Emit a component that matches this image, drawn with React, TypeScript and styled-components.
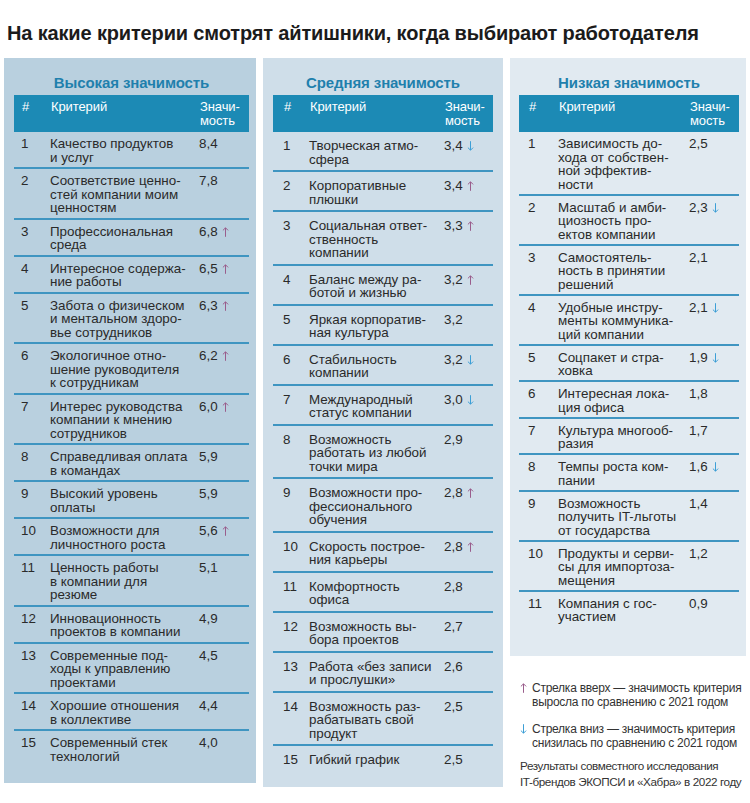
import React from "react";
import styled, { createGlobalStyle } from "styled-components";

const GlobalStyle = createGlobalStyle`
  html, body { margin: 0; padding: 0; background: #ffffff; }
  body { font-family: "Liberation Sans", Arial, sans-serif; -webkit-font-smoothing: antialiased; }
`;

type Dir = "up" | "down";
type Item = { text: string[]; value: string; dir?: Dir };

type Cfg = {
  bg: string;
  padL: number;
  padR: number;
  padB: number;
  rowPl: number;
  numW: number;
  textW: number;
  pt: number;
  pb: number;
};

const Page = styled.div`
  width: 750px;
  padding: 0 4px;
  box-sizing: border-box;
  color: #262626;
`;

const Title = styled.h1`
  margin: 0;
  padding: 22px 0 0 3px;
  font-size: 20px;
  line-height: 22px;
  font-weight: 700;
  color: #1b1b1b;
  letter-spacing: -0.15px;
  white-space: nowrap;
`;

const Columns = styled.div`
  display: grid;
  grid-template-columns: 252px 240px 236px;
  column-gap: 7px;
  margin-top: 14px;
  align-items: start;
`;

const Side = styled.div`
  display: flex;
  flex-direction: column;
`;

const Panel = styled.section<{ $c: Cfg }>`
  background: ${(p) => p.$c.bg};
  padding: 16px ${(p) => p.$c.padR}px ${(p) => p.$c.padB}px ${(p) => p.$c.padL}px;
`;

const PanelTitle = styled.h2`
  margin: 0 0 3px;
  text-align: center;
  font-size: 15px;
  line-height: 18px;
  font-weight: 700;
  color: #1f80ad;
  letter-spacing: -0.1px;
`;

const HeadBar = styled.div<{ $c: Cfg }>`
  display: grid;
  grid-template-columns: ${(p) => `${p.$c.numW}px ${p.$c.textW}px 1fr`};
  height: 37px;
  box-sizing: border-box;
  padding: 5px 0 0 ${(p) => p.$c.rowPl + 1}px;
  background: #1c8ab5;
  color: #ffffff;
  font-size: 13px;
  line-height: 13.5px;
  letter-spacing: -0.1px;
`;

const Row = styled.div<{ $c: Cfg }>`
  display: grid;
  grid-template-columns: ${(p) => `${p.$c.numW}px ${p.$c.textW}px 1fr`};
  padding: ${(p) => p.$c.pt}px 0 ${(p) => p.$c.pb}px ${(p) => p.$c.rowPl}px;
  font-size: 13.4px;
  line-height: 13.5px;
  color: #2a2a2a;
  letter-spacing: 0;
  & + & {
    border-top: 2px solid #3f95c1;
  }
`;

const Cell = styled.div`
  white-space: nowrap;
`;

const ArrowSvg = styled.svg<{ $dir: Dir }>`
  display: inline-block;
  width: 7px;
  height: 10px;
  margin-left: 4px;
  vertical-align: -1px;
  color: ${(p) => (p.$dir === "up" ? "#9a5d8c" : "#3d9fd6")};
  transform: ${(p) => (p.$dir === "down" ? "rotate(180deg)" : "none")};
`;

const Legend = styled.div`
  margin-top: 25px;
  padding-left: 10px;
  display: flex;
  flex-direction: column;
  gap: 13px;
  font-size: 12px;
  line-height: 14px;
  color: #333333;
  letter-spacing: -0.25px;
`;

const LegendItem = styled.div`
  display: grid;
  grid-template-columns: 12px 1fr;
  white-space: nowrap;
`;

const LegendMark = styled.span`
  & > svg {
    margin-left: 0;
  }
`;

const Note = styled.div`
  margin-top: -5px;
  white-space: nowrap;
  font-size: 11.7px;
  line-height: 16px;
  letter-spacing: -0.4px;
`;

const high: Item[] = [
  { text: ["Качество продуктов", "и услуг"], value: "8,4" },
  { text: ["Соответствие ценно-", "стей компании моим", "ценностям"], value: "7,8" },
  { text: ["Профессиональная", "среда"], value: "6,8", dir: "up" },
  { text: ["Интересное содержа-", "ние работы"], value: "6,5", dir: "up" },
  { text: ["Забота о физическом", "и ментальном здоро-", "вье сотрудников"], value: "6,3", dir: "up" },
  { text: ["Экологичное отно-", "шение руководителя", "к сотрудникам"], value: "6,2", dir: "up" },
  { text: ["Интерес руководства", "компании к мнению", "сотрудников"], value: "6,0", dir: "up" },
  { text: ["Справедливая оплата", "в командах"], value: "5,9" },
  { text: ["Высокий уровень", "оплаты"], value: "5,9" },
  { text: ["Возможности для", "личностного роста"], value: "5,6", dir: "up" },
  { text: ["Ценность работы", "в компании для", "резюме"], value: "5,1" },
  { text: ["Инновационность", "проектов в компании"], value: "4,9" },
  { text: ["Современные под-", "ходы к управлению", "проектами"], value: "4,5" },
  { text: ["Хорошие отношения", "в коллективе"], value: "4,4" },
  { text: ["Современный стек", "технологий"], value: "4,0" },
];

const mid: Item[] = [
  { text: ["Творческая атмо-", "сфера"], value: "3,4", dir: "down" },
  { text: ["Корпоративные", "плюшки"], value: "3,4", dir: "up" },
  { text: ["Социальная ответ-", "ственность", "компании"], value: "3,3", dir: "up" },
  { text: ["Баланс между ра-", "ботой и жизнью"], value: "3,2", dir: "up" },
  { text: ["Яркая корпоратив-", "ная культура"], value: "3,2" },
  { text: ["Стабильность", "компании"], value: "3,2", dir: "down" },
  { text: ["Международный", "статус компании"], value: "3,0", dir: "down" },
  { text: ["Возможность", "работать из любой", "точки мира"], value: "2,9" },
  { text: ["Возможности про-", "фессионального", "обучения"], value: "2,8", dir: "up" },
  { text: ["Скорость построе-", "ния карьеры"], value: "2,8", dir: "up" },
  { text: ["Комфортность", "офиса"], value: "2,8" },
  { text: ["Возможность вы-", "бора проектов"], value: "2,7" },
  { text: ["Работа «без записи", "и прослушки»"], value: "2,6" },
  { text: ["Возможность раз-", "рабатывать свой", "продукт"], value: "2,5" },
  { text: ["Гибкий график"], value: "2,5" },
];

const low: Item[] = [
  { text: ["Зависимость до-", "хода от собствен-", "ной эффектив-", "ности"], value: "2,5" },
  { text: ["Масштаб и амби-", "циозность про-", "ектов компании"], value: "2,3", dir: "down" },
  { text: ["Самостоятель-", "ность в принятии", "решений"], value: "2,1" },
  { text: ["Удобные инстру-", "менты коммуника-", "ций компании"], value: "2,1", dir: "down" },
  { text: ["Соцпакет и стра-", "ховка"], value: "1,9", dir: "down" },
  { text: ["Интересная лока-", "ция офиса"], value: "1,8" },
  { text: ["Культура многооб-", "разия"], value: "1,7" },
  { text: ["Темпы роста ком-", "пании"], value: "1,6", dir: "down" },
  { text: ["Возможность", "получить IT-льготы", "от государства"], value: "1,4" },
  { text: ["Продукты и серви-", "сы для импортоза-", "мещения"], value: "1,2" },
  { text: ["Компания с гос-", "участием"], value: "0,9" },
];

const cfgHigh: Cfg = { bg: "#b9d0df", padL: 10, padR: 7, padB: 17, rowPl: 7, numW: 29, textW: 149, pt: 5, pb: 3 };
const cfgMid: Cfg = { bg: "#cfdee9", padL: 10, padR: 10, padB: 16, rowPl: 10, numW: 26, textW: 135, pt: 7, pb: 4 };
const cfgLow: Cfg = { bg: "#e1eaf1", padL: 9, padR: 7, padB: 30, rowPl: 9, numW: 30, textW: 131, pt: 5, pb: 2.5 };

const Arrow = ({ dir }: { dir: Dir }) => (
  <ArrowSvg $dir={dir} viewBox="0 0 7 10" fill="none" stroke="currentColor" strokeWidth="1" aria-hidden="true">
    <path d="M3.5 9.8V0.9" />
    <path d="M0.9 3.4L3.5 0.8L6.1 3.4" strokeLinejoin="miter" />
  </ArrowSvg>
);

const Table = ({ title, items, cfg }: { title: string; items: Item[]; cfg: Cfg }) => (
  <Panel $c={cfg}>
    <PanelTitle>{title}</PanelTitle>
    <HeadBar $c={cfg}>
      <Cell>#</Cell>
      <Cell>Критерий</Cell>
      <Cell>
        Значи-
        <br />
        мость
      </Cell>
    </HeadBar>
    {items.map((it, i) => (
      <Row $c={cfg} key={i}>
        <Cell>{i + 1}</Cell>
        <Cell>
          {it.text.map((line, j) => (
            <React.Fragment key={j}>
              {j > 0 && <br />}
              {line}
            </React.Fragment>
          ))}
        </Cell>
        <Cell>
          {it.value}
          {it.dir && <Arrow dir={it.dir} />}
        </Cell>
      </Row>
    ))}
  </Panel>
);

export default function App() {
  return (
    <Page>
      <GlobalStyle />
      <Title>На какие критерии смотрят айтишники, когда выбирают работодателя</Title>
      <Columns>
        <Table title="Высокая значимость" items={high} cfg={cfgHigh} />
        <Table title="Средняя значимость" items={mid} cfg={cfgMid} />
        <Side>
          <Table title="Низкая значимость" items={low} cfg={cfgLow} />
          <Legend>
            <LegendItem>
              <LegendMark>
                <Arrow dir="up" />
              </LegendMark>
              <span>
                Стрелка вверх — значимость критерия
                <br />
                выросла по сравнению с 2021 годом
              </span>
            </LegendItem>
            <LegendItem>
              <LegendMark>
                <Arrow dir="down" />
              </LegendMark>
              <span>
                Стрелка вниз — значимость критерия
                <br />
                снизилась по сравнению с 2021 годом
              </span>
            </LegendItem>
            <Note>
              Результаты совместного исследования
              <br />
              IT-брендов ЭКОПСИ и «Хабра» в 2022 году
            </Note>
          </Legend>
        </Side>
      </Columns>
    </Page>
  );
}
